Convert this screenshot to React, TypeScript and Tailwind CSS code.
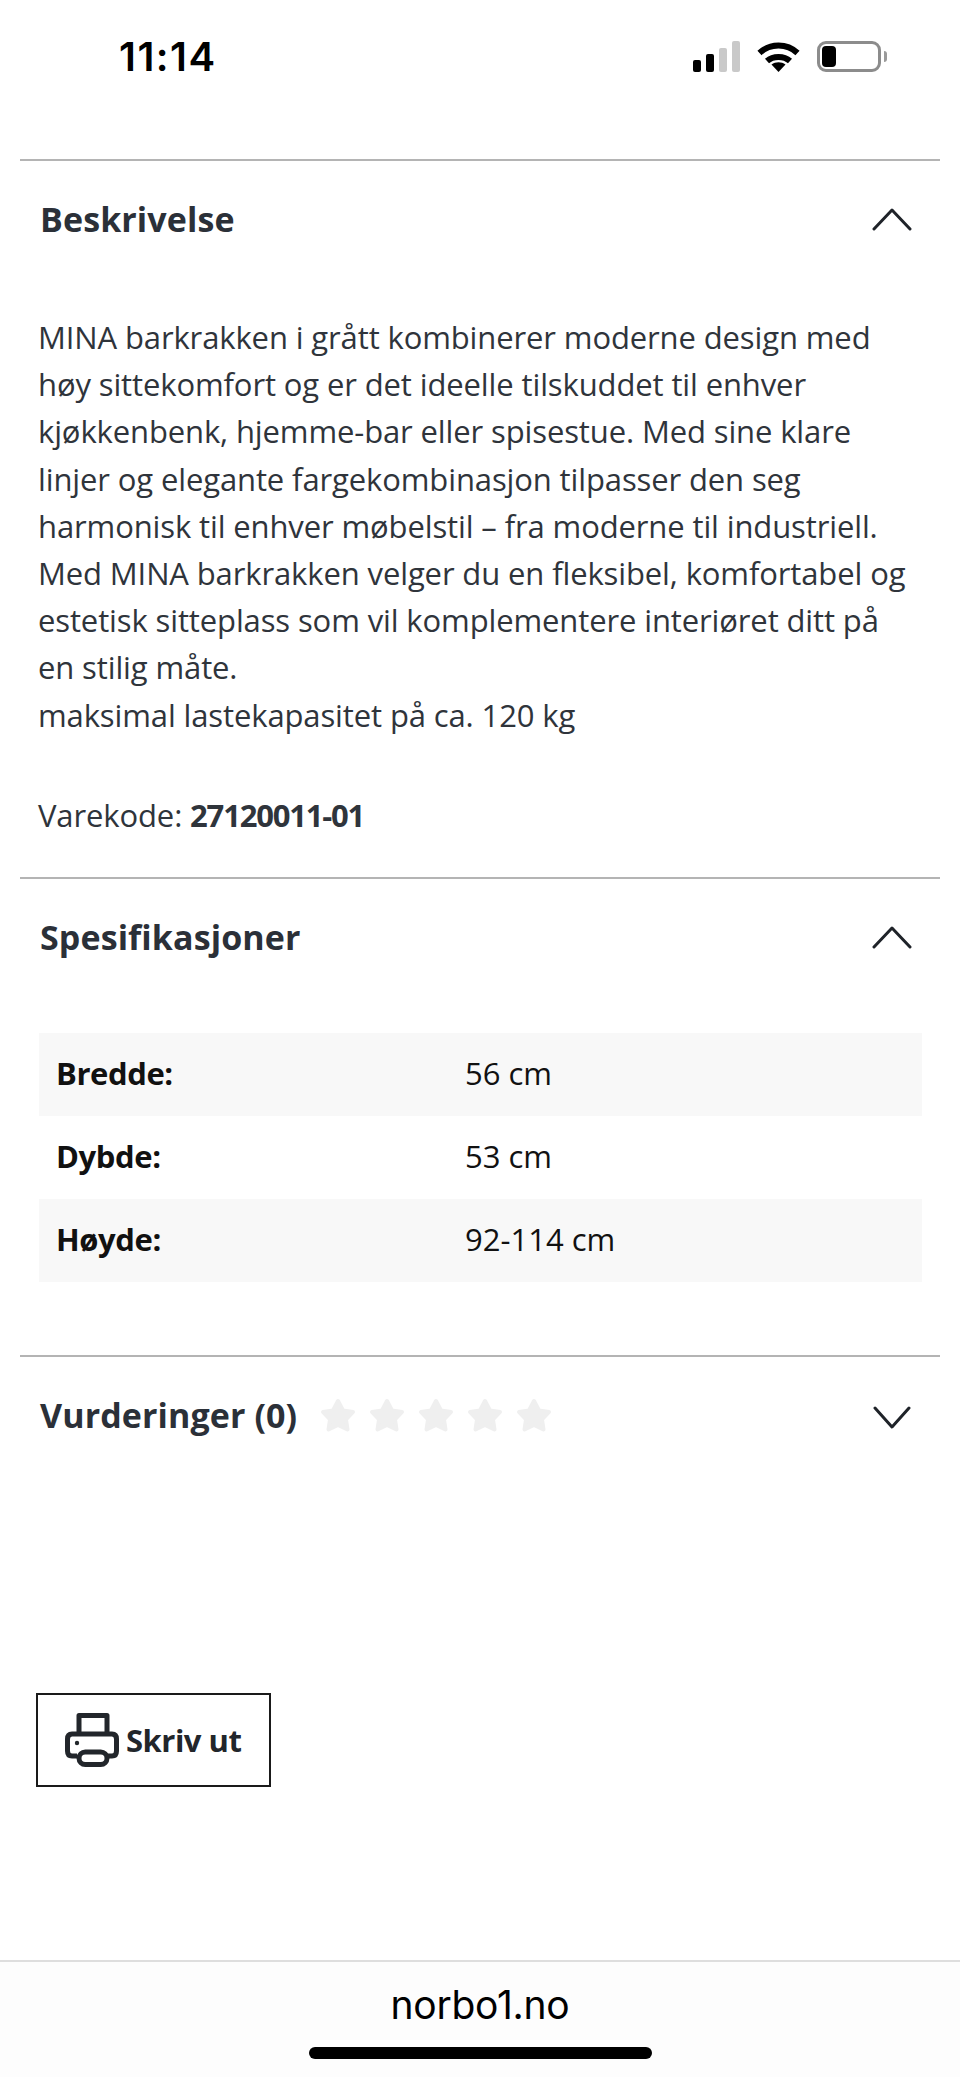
import React from "react";

const FONT = "font-['Open_Sans','Noto_Sans',sans-serif]";

const DESCRIPTION = [
  "MINA barkrakken i grått kombinerer moderne design med",
  "høy sittekomfort og er det ideelle tilskuddet til enhver",
  "kjøkkenbenk, hjemme-bar eller spisestue. Med sine klare",
  "linjer og elegante fargekombinasjon tilpasser den seg",
  "harmonisk til enhver møbelstil – fra moderne til industriell.",
  "Med MINA barkrakken velger du en fleksibel, komfortabel og",
  "estetisk sitteplass som vil komplementere interiøret ditt på",
  "en stilig måte.",
  "maksimal lastekapasitet på ca. 120 kg",
];

const SPECS = [
  { label: "Bredde:", value: "56 cm" },
  { label: "Dybde:", value: "53 cm" },
  { label: "Høyde:", value: "92-114 cm" },
];

function Chevron({ up }: { up?: boolean }) {
  return (
    <svg className={up ? "mb-[5px]" : ""} width="40" height="24" viewBox="0 0 40 24" fill="none" stroke="#1f2329" strokeWidth="3" strokeLinecap="round" strokeLinejoin="round">
      <path d={up ? "M2 22 L20 3 L38 22" : "M3 3 L20 22 L37 3"} />
    </svg>
  );
}

function Star() {
  return (
    <svg width="38" height="36" viewBox="0 0 38 36" fill="#efefef" stroke="#efefef" strokeWidth="4" strokeLinejoin="round">
      <path d="M19 4 L24 13.5 L34 15 L27 22.5 L28.5 32.5 L19 28 L9.5 32.5 L11 22.5 L4 15 L14 13.5 Z" />
    </svg>
  );
}

function SignalBars() {
  return (
    <div className="flex items-end gap-[5px] h-[31px]">
      <div className="w-2 h-3 rounded-[2px] bg-black" />
      <div className="w-2 h-[18px] rounded-[2px] bg-black" />
      <div className="w-2 h-6 rounded-[2px] bg-[#c9c9c9]" />
      <div className="w-2 h-[31px] rounded-[2px] bg-[#c9c9c9]" />
    </div>
  );
}

function Wifi() {
  return (
    <svg width="43" height="31" viewBox="0 0 43 31" fill="none" stroke="#000" strokeWidth="6">
      <path d="M2.5 12 C13 2 30 2 40.5 12" />
      <path d="M10 20 C16 14.5 27 14.5 33 20" />
      <path d="M14.5 23.5 L21.5 31 L28.5 23.5 C24.5 20.5 18.5 20.5 14.5 23.5 Z" fill="#000" stroke="none" />
    </svg>
  );
}

function Battery() {
  return (
    <div className="flex items-center gap-[3px]">
      <div className="w-16 h-[31px] rounded-[9px] border-[3px] border-[#8c8c8c] p-[2px]">
        <div className="w-[14px] h-full rounded-[4px] bg-black" />
      </div>
      <div className="w-[3px] h-[11px] rounded-r-full bg-[#9a9a9a]" />
    </div>
  );
}

function Printer() {
  return (
    <svg width="54" height="54" viewBox="0 0 54 54" fill="none" stroke="#22262b" strokeWidth="5" strokeLinejoin="round">
      <path d="M14 20 V2.5 H42 V20" />
      <path d="M12 43 H7 C4 43 2.5 41 2.5 38 V26 C2.5 23 4 21 7 21 H47 C50 21 51.5 23 51.5 26 V38 C51.5 41 50 43 47 43 H42" />
      <rect x="14" y="39" width="28" height="12.5" rx="6.25" />
      <circle cx="12" cy="30" r="2.2" fill="#22262b" stroke="none" />
    </svg>
  );
}

function Heading({ title, up, children }: { title: string; up?: boolean; children?: React.ReactNode }) {
  return (
    <div className="flex items-center justify-between h-[120px] pl-5 pr-[28px]">
      <div className="flex items-center gap-[22px]">
        <h2 className="pb-[5px] text-[34px] leading-[44px] font-bold text-[#2b3038] tracking-[0.1px]">{title}</h2>
        {children}
      </div>
      <Chevron up={up} />
    </div>
  );
}

export default function App() {
  return (
    <div className={`w-[960px] h-[2077px] flex flex-col bg-white overflow-hidden ${FONT}`}>
      <div className="h-[159px] shrink-0 pt-[41px] pl-[119px] pr-[73px] flex items-start justify-between">
        <span className="font-['Inter',sans-serif] text-[40px] leading-[31px] font-semibold text-black tracking-[1.5px]">11:14</span>
        <div className="flex items-center gap-[17px]">
          <SignalBars />
          <Wifi />
          <Battery />
        </div>
      </div>

      <section className="mx-5 border-t-2 border-[#b4b4b4] h-[718px] shrink-0">
        <Heading title="Beskrivelse" up />
        <div className="pl-[18px] mt-[33px] text-[31px] leading-[47.2px] text-[#2f343b] whitespace-nowrap tracking-[-0.12px]">
          {DESCRIPTION.map((line) => (
            <div key={line}>{line}</div>
          ))}
          <div className="mt-[53px]">
            Varekode: <span className="font-bold tracking-[-1.2px]">27120011-01</span>
          </div>
        </div>
      </section>

      <section className="mx-5 border-t-2 border-[#b4b4b4] h-[478px] shrink-0">
        <Heading title="Spesifikasjoner" up />
        <div className="ml-[19px] mr-[18px] mt-[34px] text-[31px] text-[#111111]">
          {SPECS.map((spec, i) => (
            <div key={spec.label} className={`flex items-center h-[83px] pl-[17px] pb-[2px] ${i % 2 === 0 ? "bg-[#f8f8f8]" : "bg-white"}`}>
              <div className="w-[409px] font-bold tracking-[-0.4px]">{spec.label}</div>
              <div>{spec.value}</div>
            </div>
          ))}
        </div>
      </section>

      <section className="mx-5 border-t-2 border-[#b4b4b4] shrink-0">
        <Heading title="Vurderinger (0)">
          <div className="flex gap-[11px] mb-[5px]">
            {[0, 1, 2, 3, 4].map((i) => (
              <Star key={i} />
            ))}
          </div>
        </Heading>
      </section>

      <button className="ml-9 mt-[216px] w-[235px] h-[94px] border-2 border-[#1a1a1a] flex items-center pl-[27px] gap-[7px] text-[31px] font-bold text-[#22262b] tracking-[-0.5px]">
        <Printer />
        <span className="pt-[1px]">Skriv ut</span>
      </button>

      <div className="mt-auto h-[117px] border-t-2 border-[#dedede] bg-[#fdfdfd] flex flex-col items-center">
        <div className="mt-[19px] font-['Inter',sans-serif] text-[39px] leading-[48px] text-black tracking-[-0.25px]">norbo1.no</div>
        <div className="mt-[18px] w-[343px] h-3 rounded-full bg-black" />
      </div>
    </div>
  );
}
